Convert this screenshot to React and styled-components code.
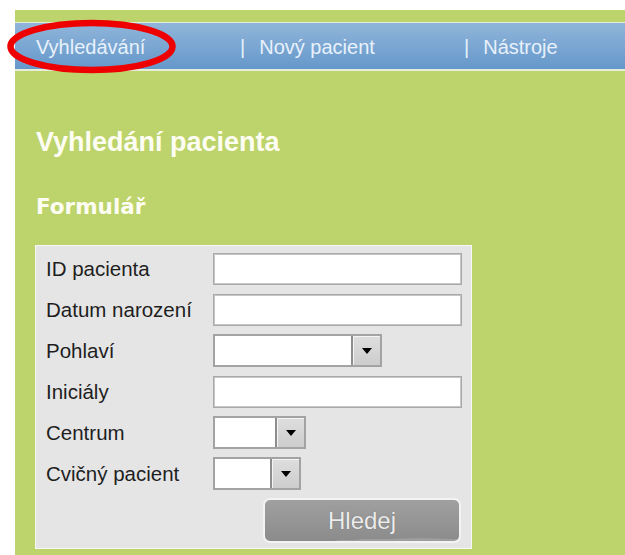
import React from "react";
import styled, { createGlobalStyle } from "styled-components";

const GlobalStyles = createGlobalStyle`
  html, body {
    margin: 0;
    padding: 0;
    background: #ffffff;
  }
  body {
    font-family: "Liberation Sans", Arial, sans-serif;
  }
`;

const Page = styled.div`
  padding: 10px 0 0 15px;
  height: 555px;
  box-sizing: border-box;
  overflow: hidden;
`;

const Panel = styled.div`
  position: relative;
  background: #bdd46c;
  height: 545px;
  padding-top: 12px;
  box-sizing: border-box;
`;

const NavBar = styled.nav`
  display: flex;
  height: 46px;
  padding-left: 21px;
  border-top: 1px solid #e6eddb;
  border-bottom: 2px solid #e6eddb;
  background: linear-gradient(#90b5da, #6598ca);
`;

const NavItem = styled.a`
  display: flex;
  align-items: center;
  gap: 14px;
  box-sizing: border-box;
  width: ${(p) => p.$width}px;
  padding-top: 2px;
  font-size: 20px;
  color: #e8f1fb;
  text-decoration: none;
  white-space: nowrap;
`;

const Pipe = styled.span`
  color: #e8f1fb;
`;

// red hand-drawn marker around the active tab
const Marker = styled.svg`
  position: absolute;
  left: -15px;
  top: 0;
  pointer-events: none;
`;

const Content = styled.main`
  padding: 0 0 0 21px;
`;

const Title = styled.h1`
  margin: 55px 0 0 0;
  font-size: 27px;
  line-height: 32px;
  font-weight: bold;
  color: #fdfdf3;
`;

const SubTitle = styled.h2`
  margin: 36px 0 0 0;
  font-family: "DejaVu Sans", Verdana, sans-serif;
  font-size: 21.5px;
  line-height: 26px;
  font-weight: bold;
  color: #fdfdf3;
`;

const FormBox = styled.form`
  margin: 25px 0 0 -1px;
  width: 437px;
  height: 304px;
  box-sizing: border-box;
  border: 1px solid #f6f6f6;
  background: #e5e5e5;
  padding: 6px 9px 0 10px;
  display: grid;
  grid-template-columns: 167px 1fr;
  grid-auto-rows: 33px;
  row-gap: 8px;
  align-items: center;
`;

const Label = styled.label`
  font-size: 20.5px;
  color: #1e1e1e;
  white-space: nowrap;
`;

const TextInput = styled.input`
  box-sizing: border-box;
  width: 249px;
  height: 32px;
  border: 1px solid #a9a9a9;
  box-shadow: inset 0 0 0 1px #c6c6c6;
  background: #fff;
  padding: 0 4px;
  font: inherit;
  font-size: 16px;
  outline: none;
`;

const SelectBox = styled.div`
  box-sizing: border-box;
  display: flex;
  width: ${(p) => p.$width}px;
  height: 33px;
  border: 2px solid #a3a3a3;
  background: #fff;
`;

const SelectValue = styled.div`
  flex: 1;
`;

const SelectArrow = styled.div`
  box-sizing: border-box;
  width: 29px;
  display: flex;
  align-items: center;
  justify-content: center;
  border-left: 2px solid #8d8d8d;
  box-shadow: inset 1px 1px 0 #f4f4f4;
  background: linear-gradient(#dedede, #cdcdcd);

  &::after {
    content: "";
    border-left: 5px solid transparent;
    border-right: 5px solid transparent;
    border-top: 6px solid #000;
  }
`;

const SearchButton = styled.button`
  grid-column: 2;
  justify-self: end;
  margin-right: 1px;
  align-self: start;
  width: 198px;
  height: 45px;
  box-sizing: border-box;
  border: 2px solid #f3f3f3;
  border-radius: 7px;
  background:
    radial-gradient(ellipse 140% 60% at 80% 130%, rgba(255, 255, 255, 0.16) 0 60%, transparent 61%),
    linear-gradient(#a0a0a0, #8b8b8b);
  color: #ececec;
  font-family: "Liberation Sans", Arial, sans-serif;
  font-size: 24px;
  text-shadow: 0 0 1px rgba(0, 0, 0, 0.35);
  cursor: pointer;
`;

const fields = [
  { label: "ID pacienta", type: "text" },
  { label: "Datum narození", type: "text" },
  { label: "Pohlaví", type: "select", width: 169 },
  { label: "Iniciály", type: "text" },
  { label: "Centrum", type: "select", width: 93 },
  { label: "Cvičný pacient", type: "select", width: 88 },
];

const App = () => {
  return (
    <>
      <GlobalStyles />
      <Page>
        <Panel>
          <NavBar>
            <NavItem $width={204}>Vyhledávání</NavItem>
            <NavItem $width={224}>
              <Pipe>|</Pipe>
              Nový pacient
            </NavItem>
            <NavItem $width={160}>
              <Pipe>|</Pipe>
              Nástroje
            </NavItem>
          </NavBar>
          <Marker width="200" height="90" viewBox="0 0 200 90">
            <ellipse
              cx="91.5"
              cy="36.5"
              rx="81"
              ry="23.5"
              fill="none"
              stroke="#ee0000"
              strokeWidth="6.5"
            />
          </Marker>
          <Content>
            <Title>Vyhledání pacienta</Title>
            <SubTitle>Formulář</SubTitle>
            <FormBox onSubmit={(e) => e.preventDefault()}>
              {fields.map((f) => (
                <React.Fragment key={f.label}>
                  <Label>{f.label}</Label>
                  {f.type === "text" ? (
                    <TextInput type="text" />
                  ) : (
                    <SelectBox $width={f.width}>
                      <SelectValue />
                      <SelectArrow />
                    </SelectBox>
                  )}
                </React.Fragment>
              ))}
              <SearchButton type="submit">Hledej</SearchButton>
            </FormBox>
          </Content>
        </Panel>
      </Page>
    </>
  );
};

export default App;
